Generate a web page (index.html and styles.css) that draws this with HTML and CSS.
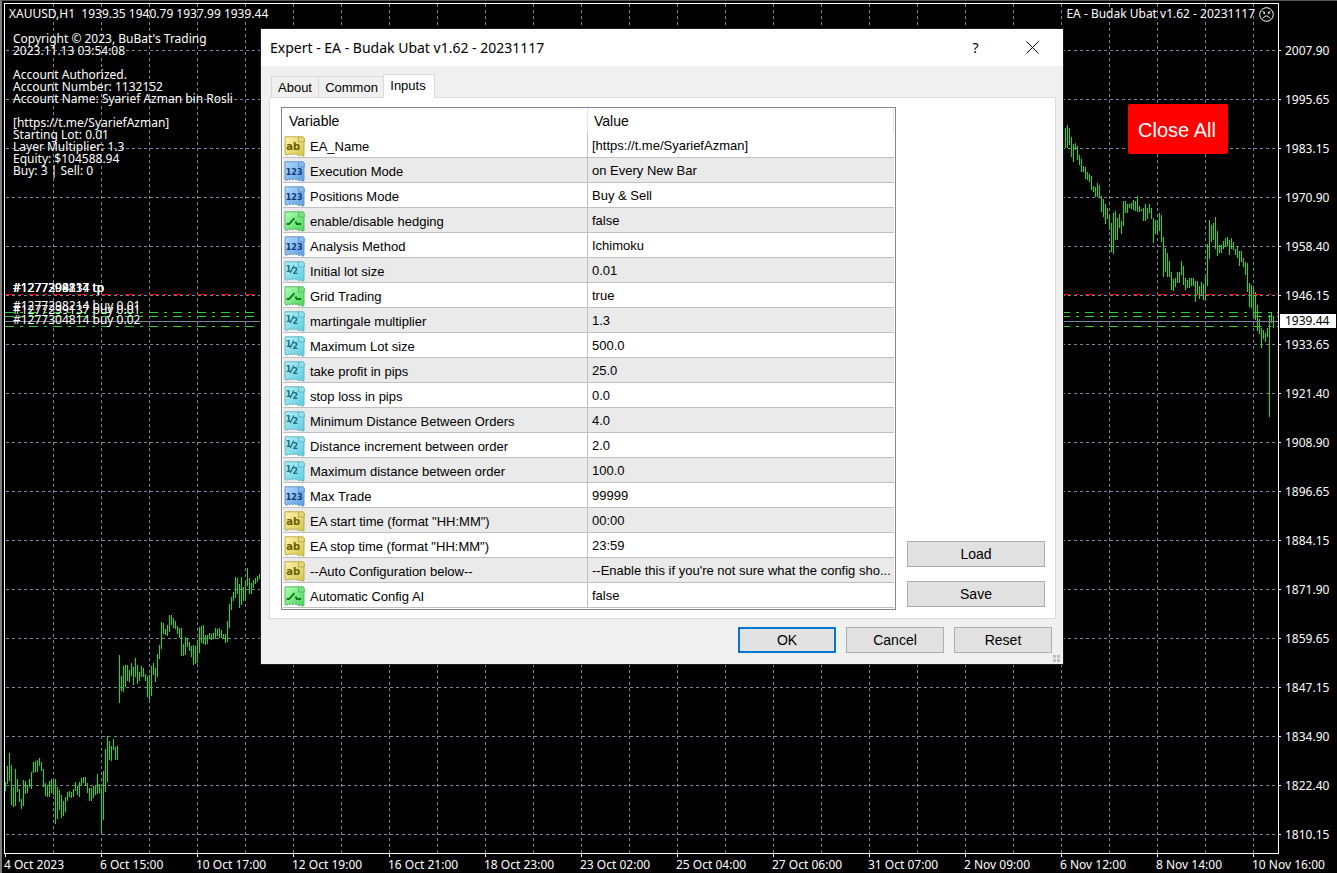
FILE: index.html
```
<!DOCTYPE html>
<html lang="en">
<head>
<meta charset="utf-8">
<title>XAUUSD,H1</title>
<link rel="stylesheet" href="styles.css">
</head>
<body>
<svg class="defs" aria-hidden="true">
  <defs>
    <linearGradient id="g-yellow" x1="0" y1="0" x2="1" y2="1"><stop offset="0" stop-color="#fbf4b0"/><stop offset="1" stop-color="#d6c544"/></linearGradient>
    <linearGradient id="g-blue" x1="0" y1="0" x2="1" y2="1"><stop offset="0" stop-color="#b4dcff"/><stop offset="1" stop-color="#5a9be0"/></linearGradient>
    <linearGradient id="g-green" x1="0" y1="0" x2="1" y2="1"><stop offset="0" stop-color="#b0ffb4"/><stop offset="1" stop-color="#4bd25a"/></linearGradient>
    <linearGradient id="g-cyan" x1="0" y1="0" x2="1" y2="1"><stop offset="0" stop-color="#b4f2fa"/><stop offset="1" stop-color="#5ccbdd"/></linearGradient>
    <path id="sheet" d="M1 .8H14.5L20 6V19.5L18 20.3L16.5 18.5L15 20L13.5 17.8L12 18.6L10.5 17.5L9 18.8L7.5 17.6L6 18.8L4.5 18L3 19.3L1 18.5Z"/>
    <path id="fold" d="M14.5 .8H19L20.3 2V6H14.5Z"/>
    <symbol id="i-text" viewBox="0 0 21 21"><use href="#sheet" fill="url(#g-yellow)" stroke="#b9ab4a"/><use href="#fold" fill="#e4d877" stroke="#b9ab4a"/><text x="2.2" y="14" class="glyph glyph-ab" fill="#6b5d08">ab</text></symbol>
    <symbol id="i-int" viewBox="0 0 21 21"><use href="#sheet" fill="url(#g-blue)" stroke="#6594c4"/><use href="#fold" fill="#85bbf0" stroke="#6594c4"/><text x="1.8" y="14" class="glyph glyph-num" fill="#123a70">123</text></symbol>
    <symbol id="i-bool" viewBox="0 0 21 21"><use href="#sheet" fill="url(#g-green)" stroke="#58b865"/><use href="#fold" fill="#77e382" stroke="#58b865"/><path d="M2.7 13H5L10.5 7.2M11.5 10.5L12.8 13H17" fill="none" stroke="#0c7a1c" stroke-width="1.8"/></symbol>
    <symbol id="i-real" viewBox="0 0 21 21"><use href="#sheet" fill="url(#g-cyan)" stroke="#67b5c2"/><use href="#fold" fill="#8ee2ee" stroke="#67b5c2"/><text x="1.8" y="10.5" class="glyph glyph-num" fill="#1b6c80">1</text><path d="M6.2 12L9.8 4.5" stroke="#1b6c80" stroke-width="1.2"/><text x="8.6" y="12.5" class="glyph glyph-num" fill="#1b6c80">2</text></symbol>
  </defs>
</svg>

<main class="terminal">
  <section class="plot">
    <svg class="canvas" id="canvas" aria-hidden="true"></svg>
    <header class="plot-head">
      <span class="symbol">XAUUSD,H1&nbsp; 1939.35 1940.79 1937.99 1939.44</span>
      <span class="expert">EA - Budak Ubat v1.62 - 20231117
        <svg class="face" viewBox="0 0 15 15" aria-hidden="true"><circle cx="7.5" cy="7.5" r="6.8"/><path d="M3.5 4.5L6 5.5M11.5 4.5L9 5.5M3.8 11.5Q7.5 6.2 11.2 11.5"/><circle cx="5.2" cy="6.3" r=".5"/><circle cx="9.8" cy="6.3" r=".5"/></svg>
      </span>
    </header>
    <div class="comment">Copyright © 2023, BuBat's Trading
2023.11.13 03:54:08

Account Authorized.
Account Number: 1132152
Account Name: Syarief Azman bin Rosli

[https://t.me/SyariefAzman]
Starting Lot: 0.01
Layer Multiplier: 1.3
Equity: $104588.94
Buy: 3 | Sell: 0</div>
    <span class="order order-tp">#1277298214 tp</span>
    <span class="order order-tp">#1277299137 tp</span>
    <span class="order order-tp">#1277304814 tp</span>
    <span class="order order-a">#1277298214 buy 0.01</span>
    <span class="order order-b">#1277299137 buy 0.01</span>
    <span class="order order-c">#1277304814 buy 0.02</span>
    <button class="close-all" type="button">Close All</button>
  </section>

  <aside class="prices">
    <ul class="price-list">
      <li>2007.90</li><li>1995.65</li><li>1983.15</li><li>1970.90</li><li>1958.40</li><li>1946.15</li><li>1933.65</li><li>1921.40</li><li>1908.90</li><li>1896.65</li><li>1884.15</li><li>1871.90</li><li>1859.65</li><li>1847.15</li><li>1834.90</li><li>1822.40</li><li>1810.15</li>
    </ul>
    <span class="price-now">1939.44</span>
  </aside>

  <ul class="times">
    <li>4 Oct 2023</li><li>6 Oct 15:00</li><li>10 Oct 17:00</li><li>12 Oct 19:00</li><li>16 Oct 21:00</li><li>18 Oct 23:00</li><li>23 Oct 02:00</li><li>25 Oct 04:00</li><li>27 Oct 06:00</li><li>31 Oct 07:00</li><li>2 Nov 09:00</li><li>6 Nov 12:00</li><li>8 Nov 14:00</li><li>10 Nov 16:00</li>
  </ul>
</main>

<section class="dialog" role="dialog" aria-labelledby="dialog-title">
  <header class="title-bar">
    <h1 class="title" id="dialog-title">Expert - EA - Budak Ubat v1.62 - 20231117</h1>
    <button class="caption-button" type="button" aria-label="Help"><span>?</span></button>
    <button class="caption-button" type="button" aria-label="Close"><svg class="cross" viewBox="0 0 13 13"><path d="M.5 .5L12.5 12.5M12.5 .5L.5 12.5"/></svg></button>
  </header>
  <div class="dialog-body">
    <div class="tabs" role="tablist">
      <button class="tab" type="button" role="tab">About</button>
      <button class="tab tab-wide" type="button" role="tab">Common</button>
      <button class="tab tab-active" type="button" role="tab" aria-selected="true">Inputs</button>
    </div>
    <div class="panel">
      <div class="table-box">
        <table class="inputs">
          <thead><tr><th class="col-name">Variable</th><th>Value</th></tr></thead>
          <tbody>
            <tr><td><svg class="icon"><use href="#i-text"/></svg>EA_Name</td><td>[https://t.me/SyariefAzman]</td></tr>
            <tr><td><svg class="icon"><use href="#i-int"/></svg>Execution Mode</td><td>on Every New Bar</td></tr>
            <tr><td><svg class="icon"><use href="#i-int"/></svg>Positions Mode</td><td>Buy &amp; Sell</td></tr>
            <tr><td><svg class="icon"><use href="#i-bool"/></svg>enable/disable hedging</td><td>false</td></tr>
            <tr><td><svg class="icon"><use href="#i-int"/></svg>Analysis Method</td><td>Ichimoku</td></tr>
            <tr><td><svg class="icon"><use href="#i-real"/></svg>Initial lot size</td><td>0.01</td></tr>
            <tr><td><svg class="icon"><use href="#i-bool"/></svg>Grid Trading</td><td>true</td></tr>
            <tr><td><svg class="icon"><use href="#i-real"/></svg>martingale multiplier</td><td>1.3</td></tr>
            <tr><td><svg class="icon"><use href="#i-real"/></svg>Maximum Lot size</td><td>500.0</td></tr>
            <tr><td><svg class="icon"><use href="#i-real"/></svg>take profit in pips</td><td>25.0</td></tr>
            <tr><td><svg class="icon"><use href="#i-real"/></svg>stop loss in pips</td><td>0.0</td></tr>
            <tr><td><svg class="icon"><use href="#i-real"/></svg>Minimum Distance Between Orders</td><td>4.0</td></tr>
            <tr><td><svg class="icon"><use href="#i-real"/></svg>Distance increment between order</td><td>2.0</td></tr>
            <tr><td><svg class="icon"><use href="#i-real"/></svg>Maximum distance between order</td><td>100.0</td></tr>
            <tr><td><svg class="icon"><use href="#i-int"/></svg>Max Trade</td><td>99999</td></tr>
            <tr><td><svg class="icon"><use href="#i-text"/></svg>EA start time (format "HH:MM")</td><td>00:00</td></tr>
            <tr><td><svg class="icon"><use href="#i-text"/></svg>EA stop time (format "HH:MM")</td><td>23:59</td></tr>
            <tr><td><svg class="icon"><use href="#i-text"/></svg>--Auto Configuration below--</td><td>--Enable this if you're not sure what the config sho...</td></tr>
            <tr><td><svg class="icon"><use href="#i-bool"/></svg>Automatic Config AI</td><td>false</td></tr>
          </tbody>
        </table>
      </div>
      <div class="side-buttons">
        <button class="button" type="button">Load</button>
        <button class="button" type="button">Save</button>
      </div>
    </div>
    <footer class="actions">
      <button class="button button-default" type="button">OK</button>
      <button class="button" type="button">Cancel</button>
      <button class="button" type="button">Reset</button>
    </footer>
  </div>
  <span class="grip"></span>
</section>
<script src="chart.js"></script>
</body>
</html>
```
FILE: styles.css
```
* { box-sizing: border-box; }

body {
  margin: 0;
  background: #000;
  color: #fff;
  font: 12px/12px "Noto Sans", "Open Sans", sans-serif;
  overflow: hidden;
}

ul { margin: 0; padding: 0; list-style: none; }
button { font: inherit; color: inherit; padding: 0; }
.defs { position: absolute; width: 0; height: 0; }

.terminal {
  display: grid;
  grid-template-columns: minmax(0, 1fr) 58px;
  grid-template-rows: minmax(0, 1fr) 19px;
  height: 100vh;
  padding: 2px 0 0 2px;
  border-top: 1px solid #5c5c5c;
  border-left: 2px solid #7c7c7c;
}

.plot { position: relative; border: 1px solid #fff; }
.canvas { position: absolute; inset: 0; width: 100%; height: 100%; shape-rendering: crispEdges; }
.grid { stroke: #778899; stroke-dasharray: 3 3; }
.bars { stroke: #00f000; }
.level { stroke-dasharray: 9 6 3 6; }
.level-tp { stroke: #f00; }
.level-open { stroke: #32cd32; }
.level-price { stroke: #778899; }

.plot-head {
  position: relative;
  display: flex;
  justify-content: space-between;
  align-items: center;
  height: 20px;
  padding: 0 4px;
}
.expert { display: flex; align-items: center; gap: 4px; }
.face { width: 15px; height: 15px; fill: none; stroke: #fff; }

.comment { position: relative; margin: 9px 8px 0; white-space: pre; }

.order { position: absolute; left: 8px; white-space: nowrap; }
.order-tp { top: 278px; }
.order-a { top: 296px; }
.order-b { top: 300px; }
.order-c { top: 310px; }

.close-all {
  position: absolute;
  top: 100px;
  right: 50px;
  width: 100px;
  height: 50px;
  padding: 2px 2px 0 0;
  border: 0;
  border-radius: 2px;
  background: #f00;
  font: 20px/24px "Liberation Sans", Arial, sans-serif;
}

.prices { position: relative; }
.price-list { padding-top: 23px; }
.price-list li { display: flex; align-items: center; gap: 4px; height: 49px; }
.price-list li::before { content: ""; width: 2px; height: 1px; background: #fff; }
.price-now {
  position: absolute;
  top: 311px;
  left: 1px;
  right: 1px;
  height: 14px;
  padding-left: 5px;
  line-height: 14px;
  background: #fff;
  color: #000;
}

.times { display: flex; grid-column: 1 / -1; min-width: 0; overflow: hidden; }
.times li { flex: 0 0 96px; white-space: nowrap; }
.times li::before { content: ""; display: block; width: 1px; height: 3px; margin: 0 0 2px 1px; background: #fff; }

.dialog {
  position: absolute;
  top: 29px;
  left: 261px;
  width: 802px;
  background: #f0f0f0;
  color: #000;
  font: 13px/16px "Liberation Sans", Arial, sans-serif;
  box-shadow: 0 0 0 1px #1a1a1a;
}
.title-bar { display: flex; align-items: stretch; height: 37px; padding: 0 2px 0 9px; background: #fff; }
.title { flex: 1; margin: 0; font: 14px/37px "Noto Sans", "Open Sans", sans-serif; }
.caption-button { display: grid; place-items: center; width: 57px; border: 0; background: none; font: 14px/20px "Noto Sans", sans-serif; }
.cross { width: 13px; height: 13px; stroke: #000; }

.dialog-body { padding: 8px 7px 11px 8px; }
.tabs { display: flex; align-items: flex-end; padding-left: 2px; }
.tab { width: 48px; height: 21px; padding-top: 2px; border: 1px solid #d9d9d9; border-bottom: 0; background: #f0f0f0; }
.tab-wide { width: 66px; border-left: 0; }
.tab-active { width: 52px; height: 24px; margin: 0 0 -1px -2px; padding: 0 2px 2px 0; background: #fff; position: relative; }

.panel { display: flex; gap: 11px; padding: 9px 10px 8px 11px; border: 1px solid #dcdcdc; background: #fff; }
.table-box { flex: 1; min-width: 0; padding: 0 1px 1px; border: 1px solid #828790; }
.inputs { width: 100%; table-layout: fixed; border-spacing: 0; }
.inputs th { height: 25px; padding: 0 6px; text-align: left; font-size: 14px; font-weight: normal; border-right: 1px solid #e5e5e5; }
.inputs .col-name { width: 305px; }
.inputs td { height: 25px; padding: 2px 4px 0; border-bottom: 1px solid #c0c0c0; line-height: 20px; white-space: nowrap; }
.inputs td:first-child { padding: 2px 0 0 1px; border-right: 1px solid #c0c0c0; }
.inputs tr:nth-child(even) td { background: #eaeaea; }
.icon { width: 21px; height: 21px; margin-right: 5px; vertical-align: -6px; }
.glyph { font-family: "DejaVu Sans", sans-serif; font-weight: bold; }
.glyph-ab { font-size: 10px; }
.glyph-num { font-size: 8px; }

.side-buttons { display: flex; flex-direction: column; justify-content: flex-end; gap: 14px; width: 138px; padding-bottom: 3px; }
.button { height: 26px; border: 1px solid #adadad; background: #e1e1e1; font-size: 14px; }
.actions { display: flex; justify-content: flex-end; gap: 10px; padding: 8px 4px 0; }
.actions .button { width: 98px; }
.actions .button-default { border: 2px solid #0078d7; }

.grip {
  position: absolute;
  right: 3px;
  bottom: 2px;
  width: 7px;
  height: 7px;
  background:
    linear-gradient(#f0f0f0, #f0f0f0) 3px 0 / 1px 7px no-repeat,
    linear-gradient(#f0f0f0, #f0f0f0) 0 3px / 7px 1px no-repeat,
    #bfbfbf;
}
```
FILE: chart.js
```
// Each run of bars starts at x and holds top,bottom pairs in thirds of a pixel below y.
const runs = [
  { x: 0, y: 556, d: "666,693 618,672 579,663 615,735 681,741 627,738 657,696 687,726 717,747 660,738 663,702 675,699 657,681 636,687 606,639 603,636 600,636 594,618 606,633 627,681 669,708 675,711 663,711 657,699 663,705 657,792 681,777 690,750 705,774 723,768 711,756 696,723 693,711 696,714 687,711 666,693 678,705 666,711 654,678 651,669 651,675 669,699 684,723 684,723 678,714 675,705 642,702 672,699 684,822 633,780 567,696 528,666 543,600 558,603 537,570 561,600 558,600 285,429 348,393 318,396 315,381 315,363 330,366 309,348 321,375 294,351 315,372 336,363 318,351 324,351 342,363 348,411 345,420 318,408 309,345 324,366 282,351 255,297 186,267 189,222 207,225 195,228 165,216 165,195 174,204 183,207 198,222 204,234 204,288 252,288 231,285 234,261 246,273 258,291 255,315 258,312 240,309 201,279 198,249 195,252 225,255 225,252 219,237 222,240 219,237 204,237 207,228 204,234 210,234 222,237 222,249 183,246 132,204 111,150 96,123 51,114 54,102 72,144 51,135 81,123 66,120 24,78 54,102 69,102 60,84 54,72 48,66 42,57" },
  { x: 1058, y: -4, d: "390,408 384,444 375,444 384,435 411,471 432,486 429,450 438,480 465,495 477,516 498,516 501,537 516,540 522,546 528,570 558,576 561,591 549,591 555,591" },
  { x: 1096, y: 186, d: "18,66 27,81 42,102 54,87 75,120 99,186 69,192 63,150 84,150 72,114 93,132 33,108 33,69 42,69 42,54 39,57 30,60 33,63 18,66 48,66 57,63 54,93 42,93 54,87 42,69 54,87 84,159 90,132 90,132 69,123 75,156 141,261 174,246 189,261 213,261 246,300 267,303 264,291 246,279 246,279 213,255 228,285 264,300 270,294 264,294 264,288 264,288 273,336 273,315 288,327 276,315 282,330 258,333 162,288 90,207 105,156 99,150 81,177 123,198 165,189 165,189 153,177 144,171 141,168 150,195 144,177 156,180 177,195 171,204 183,228 183,216 204,231 216,255 219,306 279,351 285,354 297,378 306,390 345,423 387,432 414,474 420,447 429,456 414,441 375,681 366,399 378,414" }
];

const canvas = document.getElementById("canvas");

function addPath(className, d) {
  const path = document.createElementNS("http://www.w3.org/2000/svg", "path");
  path.setAttribute("class", className);
  path.setAttribute("d", d);
  canvas.appendChild(path);
}

function draw() {
  canvas.replaceChildren();
  const width = canvas.clientWidth;
  const height = canvas.clientHeight;
  let grid = "";
  for (let x = 48; x < width; x += 48) grid += `M${x + 0.5} 0V${height}`;
  for (let y = 46; y < height; y += 49) grid += `M1 ${y + 0.5}H${width}`;
  addPath("grid", grid);

  let bars = "";
  for (const run of runs) {
    run.d.split(" ").forEach((pair, i) => {
      const [top, bottom] = pair.split(",").map(v => run.y + Math.round(v / 3));
      bars += `M${run.x + i * 2 + 0.5} ${top}V${bottom}`;
    });
  }
  addPath("bars", bars);
  addPath("level-price", `M0 317.5H${width}`);
  addPath("level level-tp", `M0 290.5H${width}`);
  for (const y of [308, 312, 322]) addPath("level level-open", `M0 ${y + 0.5}H${width}`);
}

draw();
addEventListener("resize", draw);
```
